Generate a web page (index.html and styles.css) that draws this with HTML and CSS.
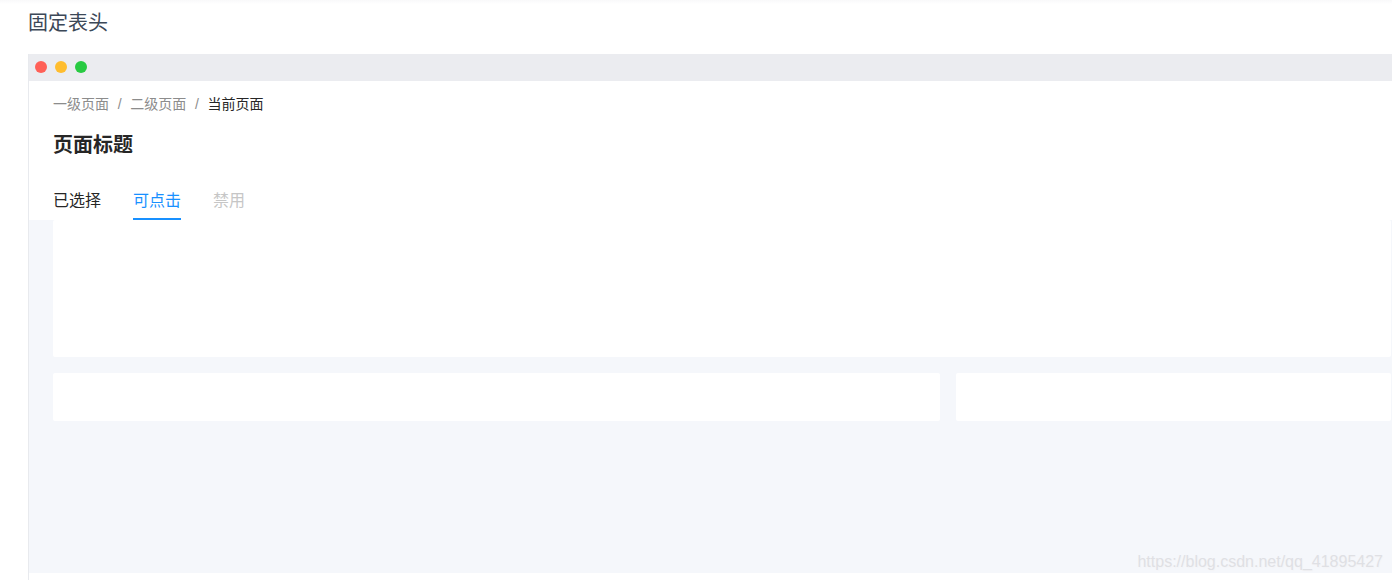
FILE: index.html
```html
<!DOCTYPE html>
<html lang="zh-CN">

<head>
    <meta charset="UTF-8">
    <meta name="viewport" content="width=device-width, initial-scale=1.0">
    <title>固定表头</title>

    <link rel="stylesheet" href="styles.css">
</head>

<body>

    <div class="top-strip"></div>

    <h2 class="doc-title">固定表头</h2>

    <div class="browser">

        <div class="browser-bar">
            <span class="dot dot-red"></span>
            <span class="dot dot-yellow"></span>
            <span class="dot dot-green"></span>
        </div>

        <div class="page-header">
            <div class="crumbs">
                <a href="javascript:;">一级页面</a>
                <span class="sep">/</span>
                <a href="javascript:;">二级页面</a>
                <span class="sep">/</span>
                <span class="current">当前页面</span>
            </div>

            <h1 class="page-title">页面标题</h1>

            <div class="tabs">
                <a href="javascript:;" class="tab">已选择</a>
                <a href="javascript:;" class="tab active">可点击</a>
                <a href="javascript:;" class="tab disabled">禁用</a>
            </div>
        </div>

        <div class="page-body">
            <div class="card card-main"></div>

            <div class="card-row">
                <div class="card card-wide"></div>
                <div class="card card-narrow"></div>
            </div>
        </div>

    </div>

    <div class="watermark">https://blog.csdn.net/qq_41895427</div>

</body>

</html>
```

FILE: styles.css
```css
* {
    margin: 0;
    padding: 0;
    box-sizing: border-box;
}

html,
body {
    height: 580px;
    overflow: hidden;
}

body {
    position: relative;
    background-color: white;
    font-family: "Liberation Sans", "Noto Sans CJK SC", sans-serif;
}

a {
    text-decoration: none;
    color: inherit;
}

.top-strip {
    height: 4px;
    background: linear-gradient(#f9f9fa, white);
}

.doc-title {
    margin-left: 28px;
    margin-top: 5px;
    font-size: 20px;
    line-height: 29px;
    font-weight: 400;
    color: #3c4858;
}

.browser {
    margin-top: 16px;
    margin-left: 28px;
    height: 526px;
    border-left: 1px solid #e8eaee;
}

.browser-bar {
    display: flex;
    align-items: center;
    gap: 8px;
    height: 27px;
    padding: 0 0 1px 6px;
    background-color: #ebecf0;
}

.dot {
    width: 12px;
    height: 12px;
    border-radius: 50%;
}

.dot-red {
    background-color: #ff6057;
}

.dot-yellow {
    background-color: #ffbd2e;
}

.dot-green {
    background-color: #28ca42;
}

.page-header {
    height: 139px;
    padding: 13px 0 0 24px;
    background-color: white;
}

.crumbs {
    display: flex;
    height: 20px;
    font-size: 14px;
    line-height: 20px;
    color: #8c8c8c;
}

.crumbs .sep {
    margin: 0 8.7px;
}

.crumbs .current {
    color: #262626;
}

.page-title {
    margin-top: 17px;
    font-size: 20px;
    line-height: 28px;
    font-weight: 600;
    color: #262626;
}

.tabs {
    display: flex;
    gap: 32px;
    margin-top: 19px;
}

.tab {
    height: 42px;
    padding-top: 11px;
    font-size: 16px;
    line-height: 24px;
    color: #262626;
}

.tab.active {
    color: #1890ff;
    border-bottom: 2px solid #1890ff;
}

.tab.disabled {
    color: #c6c6c6;
}

.page-body {
    height: 353px;
    padding: 0 0 0 24px;
    background-color: #f5f7fb;
}

.card {
    background-color: white;
    border-radius: 2px;
}

.card-main {
    width: 1338px;
    height: 137px;
}

.card-row {
    display: flex;
    gap: 16px;
    margin-top: 16px;
}

.card-wide {
    width: 887px;
    height: 48px;
}

.card-narrow {
    width: 435px;
    height: 48px;
}

.watermark {
    position: absolute;
    right: 9px;
    bottom: 8px;
    font-size: 16px;
    line-height: 20px;
    color: #dfe0e4;
    text-shadow: 1px 1px 1px #f4f4f6;
}
```
